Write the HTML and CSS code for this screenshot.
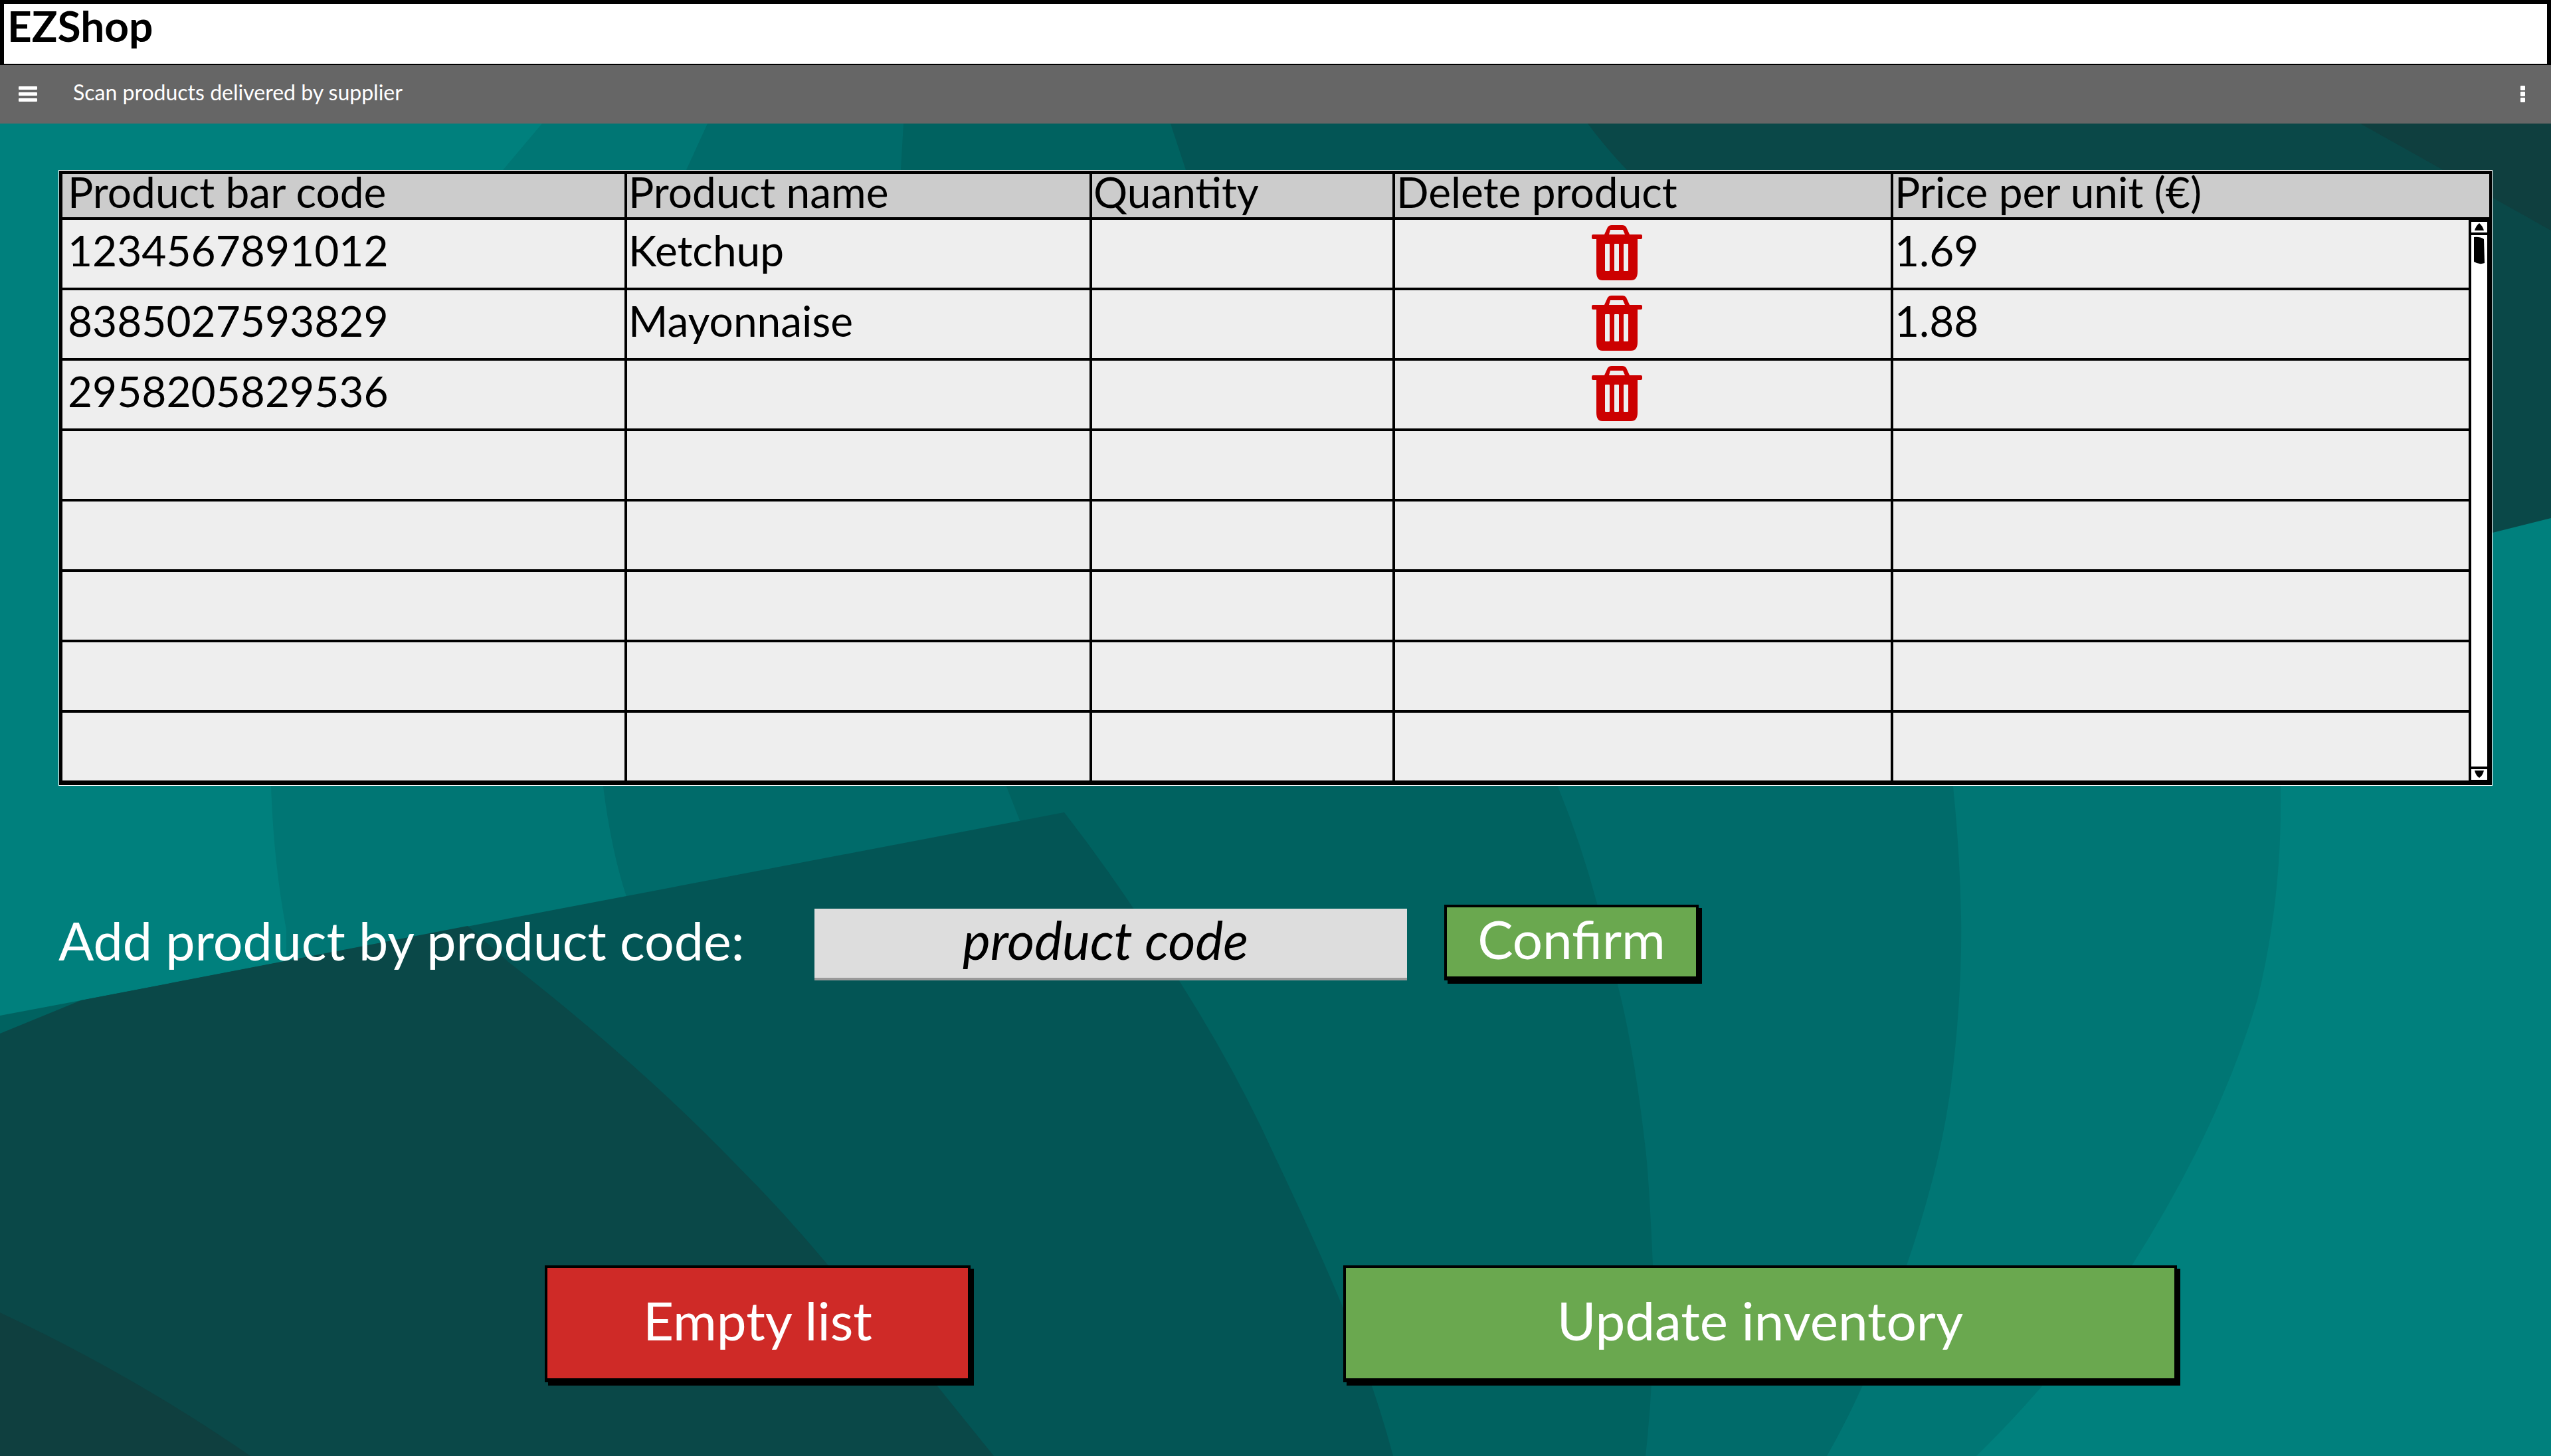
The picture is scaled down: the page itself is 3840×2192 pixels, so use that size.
FILE: index.html
```html
<!DOCTYPE html>
<html lang="en">
<head>
<meta charset="utf-8">
<meta name="viewport" content="width=device-width, initial-scale=1">
<title>EZShop</title>
<link rel="stylesheet" href="styles.css">
</head>
<body>
<svg class="backdrop" viewBox="0 0 3840 2192" preserveAspectRatio="none" aria-hidden="true">
  <path fill="#007674" d="M816 186L757 256C560 500 400 850 408 1184Q412 1300 431 1400L431 2192L2975 2192Q3110 2060 3206 1910Q3340 1700 3398 1505Q3436 1350 3433 1184L3433 186Z"/>
  <path fill="#006b6a" d="M1065 186L1033 256C910 600 890 950 908 1184Q920 1280 943 1350L943 2192L2750 2192Q2825 2060 2869 1908Q2920 1760 2936 1640Q2954 1500 2952 1380Q2950 1280 2940 1184L2840 186Z"/>
  <path fill="#006260" d="M1360 186L1356 256C1360 600 1430 900 1515 1184L1535 1235L1535 2192L2477 2192Q2492 2060 2488 1905Q2482 1770 2477 1730Q2460 1580 2435 1482Q2420 1420 2404 1360Q2380 1270 2345 1184L2200 186Z"/>
  <path fill="#035555" d="M1762 186L1785 256Q1860 600 2100 800L3840 780L3840 186Z"/>
  <path fill="#0a4848" d="M2390 186Q2415 220 2449 256Q2700 600 3000 990L3840 780L3840 186Z"/>
  <path fill="#0f3f3f" d="M3553 186L3840 347L3840 186Z"/>
  <path fill="#006260" d="M0 1529L122 1506L122 1700L0 1700Z"/>
  <path fill="#035555" d="M122 1506L1602 1223Q1700 1350 1774 1475Q1860 1610 1920 1743Q1985 1880 2020 1965Q2070 2090 2097 2192L122 2192Z"/>
  <path fill="#0a4848" d="M0 1556L122 1506L704 1394L765 1448Q960 1600 1108 1753Q1180 1825 1245 1903Q1330 1990 1408 2083L1496 2192L0 2192Z"/>
  <path fill="#0f3f3f" d="M0 1976Q200 2070 377 2192L0 2192Z"/>
</svg>

<header class="titlebar"><h1 class="brand">EZShop</h1></header>

<nav class="navbar">
  <button class="nav-button" type="button" aria-label="Menu">
    <svg width="28" height="24" viewBox="0 0 28 24" fill="#fff"><rect width="28" height="5" rx="1"/><rect y="9" width="28" height="5" rx="1"/><rect y="18" width="28" height="5" rx="1"/></svg>
  </button>
  <h2 class="page-title">Scan products delivered by supplier</h2>
  <button class="nav-button" type="button" aria-label="More options">
    <svg width="8" height="26" viewBox="0 0 8 26" fill="#fff"><rect width="7" height="7" rx="1"/><rect y="9" width="7" height="7" rx="1"/><rect y="18" width="7" height="7" rx="1"/></svg>
  </button>
</nav>

<main class="content">
  <svg class="symbols" aria-hidden="true">
    <symbol id="trash" viewBox="0 0 76 84">
      <path fill="#c00" fill-rule="evenodd" d="M2 14H19L24 3Q26 0 30 0H46Q50 0 52 3L57 14H74Q76 14 76 16V19Q76 21 74 21H69V70Q69 83 59 83H16Q7 83 7 70V21H2Q0 21 0 19V16Q0 14 2 14ZM26 14H50L47 7H28ZM21 28Q20 28 20 29V68Q20 69 21 69H26Q27 69 27 68V29Q27 28 26 28ZM35 28Q34 28 34 29V68Q34 69 35 69H40Q41 69 41 68V29Q41 28 40 28ZM49 28Q48 28 48 29V68Q48 69 49 69H54Q55 69 55 68V29Q55 28 54 28Z"/>
    </symbol>
  </svg>

  <div class="table-frame">
    <table class="products">
      <colgroup><col class="col-code"><col class="col-name"><col class="col-quantity"><col class="col-delete"><col class="col-price"></colgroup>
      <thead>
        <tr><th scope="col">Product bar code</th><th scope="col">Product name</th><th scope="col">Quantity</th><th scope="col">Delete product</th><th scope="col">Price per unit (€)</th></tr>
      </thead>
      <tbody>
        <tr><td>1234567891012</td><td>Ketchup</td><td></td><td class="delete-cell"><button class="delete" type="button" aria-label="Delete Ketchup"><svg width="76" height="84"><use href="#trash"/></svg></button></td><td>1.69</td></tr>
        <tr><td>8385027593829</td><td>Mayonnaise</td><td></td><td class="delete-cell"><button class="delete" type="button" aria-label="Delete Mayonnaise"><svg width="76" height="84"><use href="#trash"/></svg></button></td><td>1.88</td></tr>
        <tr><td>2958205829536</td><td></td><td></td><td class="delete-cell"><button class="delete" type="button" aria-label="Delete 2958205829536"><svg width="76" height="84"><use href="#trash"/></svg></button></td><td></td></tr>
        <tr><td></td><td></td><td></td><td></td><td></td></tr>
        <tr><td></td><td></td><td></td><td></td><td></td></tr>
        <tr><td></td><td></td><td></td><td></td><td></td></tr>
        <tr><td></td><td></td><td></td><td></td><td></td></tr>
        <tr><td></td><td></td><td></td><td></td><td></td></tr>
      </tbody>
    </table>
    <div class="scrollbar" aria-hidden="true">
      <div class="scroll-end scroll-up"><svg width="16" height="12" viewBox="0 0 16 12"><path d="M1 11Q3 4 8 0Q13 4 15 11Z"/></svg></div>
      <svg class="thumb" width="16" height="42" viewBox="0 0 16 42"><path d="M0 1Q9 0 15 4L16 40Q8 43 0 38Z"/></svg>
      <div class="scroll-end scroll-down"><svg width="16" height="12" viewBox="0 0 16 12"><path d="M1 0H15Q13 8 8 11Q3 8 1 0Z"/></svg></div>
    </div>
  </div>

  <form class="add-form">
    <label class="add-label" for="code">Add product by product code:</label>
    <input class="add-input" id="code" type="text" placeholder="product code">
    <button class="button button-green button-confirm" type="button">Confirm</button>
  </form>

  <div class="actions">
    <button class="button button-red button-empty" type="button">Empty list</button>
    <button class="button button-green button-update" type="button">Update inventory</button>
  </div>
</main>
</body>
</html>
```
FILE: styles.css
```css
*, *::before, *::after { box-sizing: border-box; }

body {
  margin: 0;
  min-height: 100vh;
  display: flex;
  flex-direction: column;
  background: #00807d;
  color: #000;
  font-family: Lato, "Open Sans", sans-serif;
  font-size: 64px;
}

button, input { font: inherit; color: inherit; }
button { cursor: pointer; }

.backdrop {
  position: fixed;
  inset: 0;
  z-index: -1;
  width: 100%;
  height: 100%;
}

.symbols { display: none; }

.titlebar {
  height: 98px;
  padding: 0 5px;
  border: solid #000;
  border-width: 6px 6px 2px;
  background: #fff;
}

.brand {
  margin: 0;
  font-size: 64px;
  font-weight: 700;
  line-height: 66px;
}

.navbar {
  display: flex;
  align-items: center;
  height: 88px;
  padding: 0 38px 0 28px;
  background: #666;
  color: #fff;
}

.nav-button {
  display: flex;
  padding: 0;
  border: 0;
  background: none;
}

.page-title {
  flex: 1;
  margin: 0;
  padding: 0 0 6px 54px;
  font-size: 32px;
  font-weight: 400;
  line-height: 40px;
}

.content {
  flex: 1;
  padding: 70px 88px 0;
}

.table-frame {
  position: relative;
  border: solid #000;
  border-width: 5px 4px 3px 5px;
  outline: 1px solid #fff;
  margin: 1px;
}

.products {
  width: 100%;
  table-layout: fixed;
  border-collapse: separate;
  border-spacing: 0;
}

.col-code { width: 850px; }
.col-name { width: 700px; }
.col-quantity { width: 456px; }
.col-delete { width: 750px; }

.products th,
.products td {
  padding: 0 2px;
  border: solid #000;
  border-width: 0 4px 4px 0;
  text-align: left;
  vertical-align: top;
  white-space: nowrap;
}

.products th:first-child,
.products td:first-child { padding-left: 8px; }

.products th:last-child,
.products td:last-child { border-right: 0; }

.products th {
  height: 69px;
  background: #ccc;
  font-weight: 400;
  line-height: 54px;
}

.products td {
  height: 106px;
  background: #eee;
  line-height: 92px;
}

.products .delete-cell { padding: 8px 78px 0 0; }

.delete {
  display: block;
  margin: 0 auto;
  padding: 0;
  border: 0;
  background: none;
}

.delete svg { display: block; }

.scrollbar {
  position: absolute;
  top: 69px;
  right: 0;
  bottom: 0;
  display: flex;
  flex-direction: column;
  align-items: center;
  width: 31px;
  border: solid #000;
  border-width: 3px 3px 5px 4px;
  background: #fff;
}

.scroll-end {
  width: 100%;
  height: 20px;
  display: flex;
  align-items: center;
  justify-content: center;
}

.scroll-up { border-bottom: 4px solid #000; }
.scroll-down { margin-top: auto; border-top: 4px solid #000; }
.thumb { margin-top: 2px; }

.add-form {
  display: flex;
  align-items: flex-end;
  margin-top: 180px;
}

.add-label {
  width: 1138px;
  padding-bottom: 12px;
  color: #fff;
  font-size: 79px;
  line-height: 96px;
}

.add-input {
  width: 892px;
  height: 108px;
  margin-right: 56px;
  padding: 0 16px 12px 0;
  border: 0;
  border-bottom: 4px solid #999;
  border-radius: 0;
  background: #ddd;
  font-size: 79px;
  font-style: italic;
  text-align: center;
}

.add-input::placeholder { color: #000; opacity: 1; }

.button {
  padding: 0 0 10px;
  border: solid #000;
  border-width: 4px 4px 6px;
  border-radius: 0;
  box-shadow: 5px 5px 0 #000;
  color: #fff;
  font-size: 80px;
  line-height: 92px;
}

.button-green { background: #6aa84f; }
.button-red { background: #cf2a27; }

.button-confirm { width: 383px; height: 114px; }

.actions {
  display: grid;
  grid-template-columns: 732fr 641fr 561fr 1255fr 475fr;
  margin-top: 429px;
  padding-bottom: 80px;
}

.button-empty, .button-update { height: 176px; }
.button-empty { grid-column: 2; }
.button-update { grid-column: 4; }
```
